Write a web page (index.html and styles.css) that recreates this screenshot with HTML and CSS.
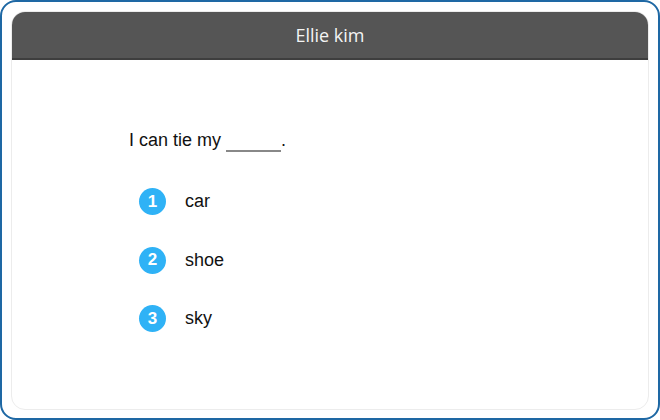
FILE: index.html
```html
<!DOCTYPE html>
<html lang="en">
<head>
  <meta charset="UTF-8">
  <title>Ellie kim</title>
  <link rel="stylesheet" href="styles.css">
</head>
<body>
  <div class="frame">
    <div class="card">
      <div class="card-header">Ellie kim</div>
      <div class="quiz">
        <div class="question">I can tie my <span class="blank"></span>.</div>
        <div class="options">
          <div class="option"><span class="num">1</span><span class="label">car</span></div>
          <div class="option"><span class="num">2</span><span class="label">shoe</span></div>
          <div class="option"><span class="num">3</span><span class="label">sky</span></div>
        </div>
      </div>
    </div>
  </div>
</body>
</html>
```

FILE: styles.css
```css
body {
  margin: 0;
  background: #fff;
}

.frame {
  width: 660px;
  height: 420px;
  box-sizing: border-box;
  border: 2px solid #1e68a4;
  border-radius: 16px;
  padding: 9px;
  background: #fff;
}

.card {
  height: 399px;
  box-sizing: border-box;
  border: 1px solid #ececec;
  border-radius: 14px;
  overflow: hidden;
  display: flex;
  flex-direction: column;
}

.card-header {
  height: 46px;
  background: #555555;
  border-bottom: 2px solid #3e3e3e;
  color: #f4f4f4;
  font-family: "Open Sans", sans-serif;
  font-size: 18px;
  display: flex;
  align-items: center;
  justify-content: center;
}

.quiz {
  padding: 69px 0 0 117px;
  font-family: "Liberation Sans", Arial, sans-serif;
  color: #111;
}

.question {
  font-size: 18px;
  line-height: 22px;
}

.blank {
  display: inline-block;
  width: 55px;
  height: 2px;
  background: #888;
  vertical-align: -6px;
}

.options {
  display: flex;
  flex-direction: column;
  gap: 31.5px;
  margin-top: 36px;
  padding-left: 10px;
}

.option {
  display: flex;
  align-items: center;
  height: 27px;
  font-size: 18px;
}

.num {
  width: 27px;
  height: 27px;
  border-radius: 50%;
  background: #2fb2f6;
  color: #fff;
  font-weight: bold;
  font-size: 17px;
  display: flex;
  align-items: center;
  justify-content: center;
  margin-right: 19px;
}
```
